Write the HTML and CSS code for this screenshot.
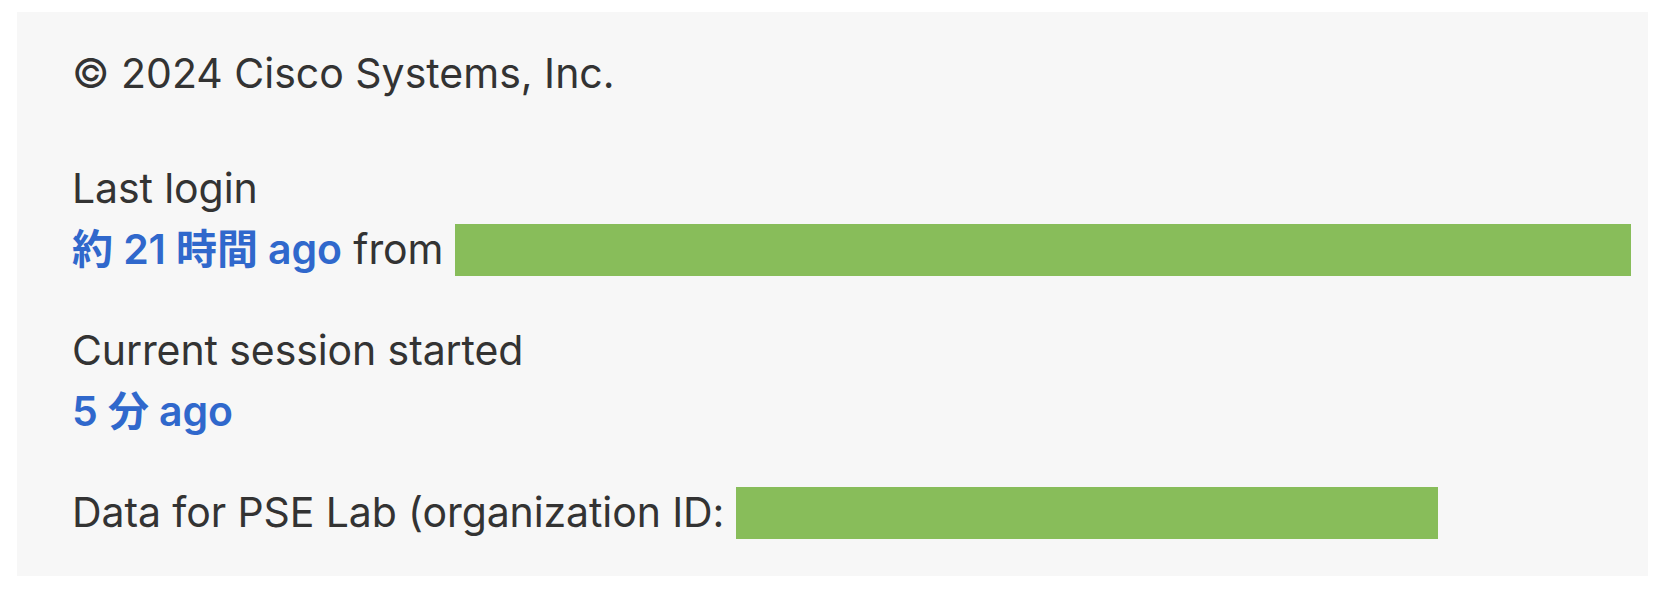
FILE: index.html
```html
<!DOCTYPE html>
<html lang="en">
<head>
<meta charset="utf-8">
<link rel="stylesheet" href="styles.css">
</head>
<body>
<div class="panel">
  <p class="copyright">© 2024 Cisco Systems, Inc.</p>
  <div class="group">
    <div class="label">Last login</div>
    <div class="value"><span class="blue">約 21 時間 ago</span> from <span class="redact redact-ip"></span></div>
  </div>
  <div class="group">
    <div class="label">Current session started</div>
    <div class="value"><span class="blue">5 分 ago</span></div>
  </div>
  <div class="group">
    <div class="value">Data for PSE Lab (organization ID: <span class="redact redact-org"></span></div>
  </div>
</div>
</body>
</html>
```

FILE: styles.css
```css
html, body {
  margin: 0;
  padding: 0;
  background: #ffffff;
}
body {
  padding: 12px 16px 20px 17px;
  font-family: Inter, "Noto Sans CJK JP", sans-serif;
  color: #333333;
}
.panel {
  background: #f7f7f7;
  height: 564px;
  box-sizing: border-box;
  padding: 31px 55px 0 55px;
  font-size: 41px;
  line-height: 61px;
}
.copyright {
  margin: 0 0 54px 0;
}
.group {
  margin-bottom: 40px;
  letter-spacing: -0.1px;
}
.label, .value {
  white-space: nowrap;
}
.blue {
  color: #3068cc;
  font-weight: 600;
}
.redact {
  display: inline-block;
  vertical-align: -12px;
  height: 52px;
  background: #88bd5a;
}
.redact-ip {
  width: 1176px;
}
.redact-org {
  width: 702px;
}
```
